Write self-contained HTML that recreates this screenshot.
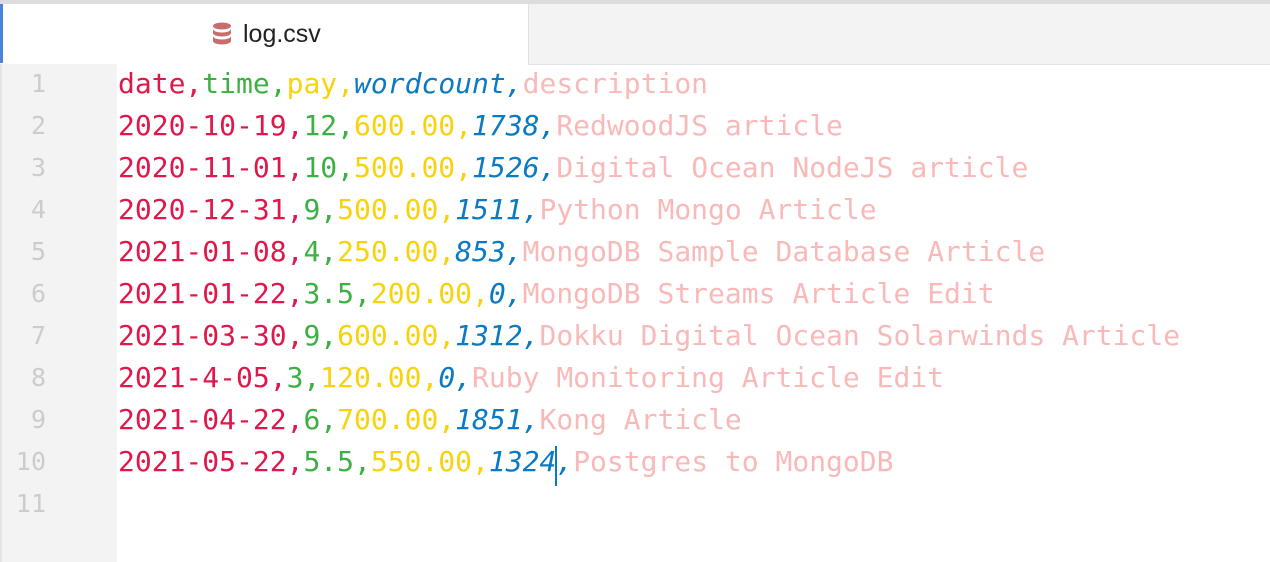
<!DOCTYPE html>
<html><head><style>
body{margin:0;width:1270px;height:562px;overflow:hidden;background:#fff;position:relative;font-family:"DejaVu Sans Mono",monospace}
.top{position:absolute;left:0;top:0;width:1270px;height:4px;background:#dcdcdc}
.bar{position:absolute;left:0;top:4px;width:1270px;height:60px;background:#f3f3f3;border-bottom:1px solid #e4e4e4}
.tab{position:absolute;left:0;top:4px;width:528px;height:61px;background:#fff;border-right:1px solid #e0e0e0}
.blue{position:absolute;left:0;top:4px;width:3px;height:59px;background:#4a82e0}
.title{position:absolute;left:243px;top:20px;font:25px "Liberation Sans",sans-serif;color:#222}
.gut{position:absolute;left:0;top:64px;width:117px;height:498px;background:#f3f3f3;border-left:2px solid #e4e4e4;box-sizing:border-box}
.ln{position:absolute;left:0;width:46px;text-align:right;font-size:25px;color:#ccc}
.code{position:absolute;left:118px;top:63px;font-size:28px;line-height:42px;white-space:pre}
.r{color:#e0174a}.g{color:#3cb043}.y{color:#f8d30d}.b{color:#0a7ac4;font-style:italic}.p{color:#f9b9b9}
.cur{position:absolute;left:555px;top:446px;width:2px;height:40px;background:#0a7ac4}
</style></head><body>
<div class="top"></div><div class="bar"></div><div class="tab"></div><div class="blue"></div>
<svg style="position:absolute;left:212px;top:22px" width="20" height="24" viewBox="0 0 20 24"><g fill="#c86e6e"><ellipse cx="10" cy="4" rx="9" ry="3.5"/><path d="M1 7c0 2 4 3.5 9 3.5s9-1.5 9-3.5v4c0 2-4 3.5-9 3.5s-9-1.5-9-3.5z"/><path d="M1 14c0 2 4 3.5 9 3.5s9-1.5 9-3.5v5c0 2-4 3.5-9 3.5s-9-1.5-9-3.5z"/></g></svg>
<div class="title">log.csv</div>
<div class="gut"></div>
<div class="ln" style="top:69px">1</div><div class="ln" style="top:111px">2</div><div class="ln" style="top:153px">3</div><div class="ln" style="top:195px">4</div><div class="ln" style="top:237px">5</div><div class="ln" style="top:279px">6</div><div class="ln" style="top:321px">7</div><div class="ln" style="top:363px">8</div><div class="ln" style="top:405px">9</div><div class="ln" style="top:447px">10</div><div class="ln" style="top:489px">11</div>
<div class="code"><span class="r">date,</span><span class="g">time,</span><span class="y">pay,</span><span class="b">wordcount,</span><span class="p">description</span>
<span class="r">2020-10-19,</span><span class="g">12,</span><span class="y">600.00,</span><span class="b">1738,</span><span class="p">RedwoodJS article</span>
<span class="r">2020-11-01,</span><span class="g">10,</span><span class="y">500.00,</span><span class="b">1526,</span><span class="p">Digital Ocean NodeJS article</span>
<span class="r">2020-12-31,</span><span class="g">9,</span><span class="y">500.00,</span><span class="b">1511,</span><span class="p">Python Mongo Article</span>
<span class="r">2021-01-08,</span><span class="g">4,</span><span class="y">250.00,</span><span class="b">853,</span><span class="p">MongoDB Sample Database Article</span>
<span class="r">2021-01-22,</span><span class="g">3.5,</span><span class="y">200.00,</span><span class="b">0,</span><span class="p">MongoDB Streams Article Edit</span>
<span class="r">2021-03-30,</span><span class="g">9,</span><span class="y">600.00,</span><span class="b">1312,</span><span class="p">Dokku Digital Ocean Solarwinds Article</span>
<span class="r">2021-4-05,</span><span class="g">3,</span><span class="y">120.00,</span><span class="b">0,</span><span class="p">Ruby Monitoring Article Edit</span>
<span class="r">2021-04-22,</span><span class="g">6,</span><span class="y">700.00,</span><span class="b">1851,</span><span class="p">Kong Article</span>
<span class="r">2021-05-22,</span><span class="g">5.5,</span><span class="y">550.00,</span><span class="b">1324,</span><span class="p">Postgres to MongoDB</span>
</div>
<div class="cur"></div>
</body></html>
